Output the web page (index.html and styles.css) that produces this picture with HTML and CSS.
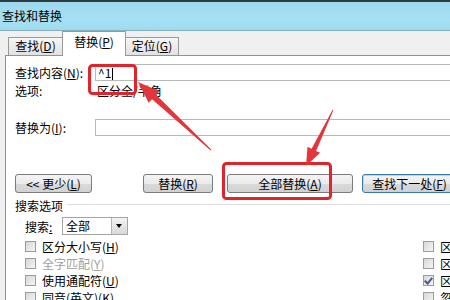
FILE: index.html
```
<!DOCTYPE html>
<html>
<head>
    <title>查找和替换</title>
    <link rel="stylesheet" href="styles.css">
</head>
<body>

    <div class="window">
        <div class="titlebar">查找和替换</div>

        <div class="dialog">
            <div class="tabs">
                <div class="tab tab-find">查找(<u>D</u>)</div>
                <div class="tab tab-replace active">替换(<u>P</u>)</div>
                <div class="tab tab-goto">定位(<u>G</u>)</div>
            </div>

            <div class="panel">
                <div class="field-row find-row">
                    <label class="field-label">查找内容(<u>N</u>):</label>
                    <div class="text-box">^1<span class="caret"></span></div>
                </div>
                <div class="option-row">
                    <span class="field-label">选项:</span>
                    <span class="option-value">区分全/半角</span>
                </div>
                <div class="field-row replace-row">
                    <label class="field-label">替换为(<u>I</u>):</label>
                    <div class="text-box"></div>
                </div>

                <div class="button-row">
                    <button class="btn btn-less" type="button">&lt;&lt; 更少(<u>L</u>)</button>
                    <button class="btn btn-replace" type="button">替换(<u>R</u>)</button>
                    <button class="btn btn-all" type="button">全部替换(<u>A</u>)</button>
                    <button class="btn btn-next default" type="button">查找下一处(<u>F</u>)</button>
                </div>

                <div class="group-title"><span>搜索选项</span><span class="group-line"></span></div>

                <div class="search-options">
                    <div class="search-row">
                        <span class="search-label">搜索<u>:</u></span>
                        <div class="select-box">
                            <span class="select-value">全部</span>
                            <span class="select-arrow"></span>
                        </div>
                    </div>

                    <div class="check-grid">
                        <div class="check"><span class="box"></span>区分大小写(<u>H</u>)</div>
                        <div class="check"><span class="box"></span>区分前缀(<u>X</u>)</div>
                        <div class="check disabled"><span class="box"></span>全字匹配(<u>Y</u>)</div>
                        <div class="check"><span class="box"></span>区分后缀(<u>T</u>)</div>
                        <div class="check"><span class="box"></span>使用通配符(<u>U</u>)</div>
                        <div class="check"><span class="box checked"></span>区分全/半角(<u>M</u>)</div>
                        <div class="check"><span class="box"></span>同音(英文)(<u>K</u>)</div>
                        <div class="check"><span class="box"></span>忽略标点符号(<u>S</u>)</div>
                    </div>
                </div>
            </div>
        </div>

        <svg class="annotations" width="450" height="300" viewBox="0 0 450 300">
            <rect x="89.5" y="65.5" width="46" height="28" rx="3" fill="none" stroke="#e0242a" stroke-width="3"/>
            <rect x="223.5" y="163.5" width="107" height="35" rx="3" fill="none" stroke="#e0242a" stroke-width="3"/>
            <polygon points="138,82 159.5,91.2 156.1,94.8 211.3,149.6 210.7,150.4 152.1,99.2 148.7,102.8" fill="#e3363c"/>
            <polygon points="306,166 320.1,152.8 316.1,150.9 333.4,110.2 332.6,109.8 311.6,148.7 307.5,146.8" fill="#e3363c"/>
        </svg>
    </div>

</body>
</html>
```

FILE: styles.css
```
body {
    margin: 0;
    width: 450px;
    height: 300px;
    overflow: hidden;
    font-family: "Noto Sans CJK SC", "Liberation Sans", sans-serif;
    font-size: 12px;
    color: #000;
    background: #ffffff;
}

u {
    text-decoration: underline;
    text-underline-offset: 1px;
}

.window {
    position: relative;
    width: 480px;
    height: 300px;
}

.titlebar {
    height: 28px;
    line-height: 28px;
    padding-left: 2px;
    border-top: 2px solid #2e3b3f;
    border-bottom: 1px solid #86aebc;
    background: linear-gradient(180deg, #9cd9ee 0%, #a6e0f3 60%, #9fdbef 100%);
}

.dialog {
    background: #f0f0f0;
    padding-left: 5px;
    height: 269px;
    display: flex;
    flex-direction: column;
}

.tabs {
    display: flex;
    align-items: flex-end;
    height: 26px;
    padding-left: 3px;
}

.tab {
    box-sizing: border-box;
    height: 18px;
    line-height: 16px;
    text-align: center;
    border: 1px solid #9a9a9a;
    border-bottom: none;
    background: linear-gradient(180deg, #f6f6f6, #e2e2e2);
}

.tab-find {
    width: 55px;
}

.tab-goto {
    width: 54px;
}

.tab.active {
    position: relative;
    z-index: 1;
    width: 64px;
    height: 25px;
    line-height: 20px;
    margin: 0 -1px -1px -1px;
    background: #ffffff;
}

.panel {
    flex: 1;
    background: #ffffff;
    border-top: 1px solid #929292;
    border-left: 1px solid #929292;
    padding: 8px 0 0 9px;
}

.field-row {
    display: flex;
    align-items: center;
    height: 17px;
}

.field-label {
    width: 80px;
    flex-shrink: 0;
}

.text-box {
    box-sizing: border-box;
    flex: 1;
    height: 17px;
    line-height: 15px;
    padding-left: 2px;
    border: 1px solid #b9b9b9;
    background: #ffffff;
}

.caret {
    display: inline-block;
    width: 1px;
    height: 12px;
    margin-left: 1px;
    vertical-align: -2px;
    background: #000;
}

.option-row {
    display: flex;
    height: 14px;
    line-height: 14px;
    margin-top: 3px;
}

.option-value {
    padding-left: 2px;
}

.replace-row {
    margin-top: 21px;
}

.button-row {
    display: flex;
    height: 19px;
    margin-top: 38px;
}

.btn {
    box-sizing: border-box;
    flex-shrink: 0;
    height: 19px;
    padding: 0;
    font-family: inherit;
    font-size: 12px;
    line-height: 17px;
    color: #000;
    border: 1px solid #7c7c7c;
    border-radius: 3px;
    background: linear-gradient(180deg, #f4f4f4 0%, #ebebeb 50%, #dadada 51%, #d2d2d2 100%);
}

.btn-less {
    width: 77px;
}

.btn-replace {
    width: 70px;
    margin-left: 51px;
}

.btn-all {
    width: 126px;
    margin-left: 14px;
}

.btn-next {
    width: 95px;
    margin-left: 9px;
}

.btn.default {
    border-color: #3a7aa8;
    box-shadow: inset 0 0 0 1px #a8dcf0;
}

.group-title {
    display: flex;
    align-items: center;
    height: 14px;
    line-height: 14px;
    margin-top: 6px;
}

.group-line {
    flex: 1;
    height: 1px;
    margin: -3px 0 0 4px;
    background: #dcdcdc;
}

.search-options {
    padding-left: 10px;
}

.search-row {
    display: flex;
    align-items: center;
    height: 18px;
    margin-top: 4px;
}

.search-label {
    width: 37px;
}

.select-box {
    box-sizing: border-box;
    display: flex;
    width: 66px;
    height: 18px;
    border: 1px solid #a5a5a5;
    background: #ffffff;
}

.select-value {
    flex: 1;
    line-height: 16px;
    padding-left: 3px;
}

.select-arrow {
    position: relative;
    width: 15px;
    border-left: 1px solid #b5b5b5;
    background: linear-gradient(180deg, #f3f3f3, #d9d9d9);
}

.select-arrow::after {
    content: "";
    position: absolute;
    left: 4px;
    top: 6px;
    border-left: 3px solid transparent;
    border-right: 3px solid transparent;
    border-top: 4px solid #000;
}

.check-grid {
    display: grid;
    grid-template-columns: 398px 120px;
    grid-auto-rows: 17px;
    margin-top: 3px;
}

.check {
    display: flex;
    align-items: center;
    white-space: nowrap;
}

.check.disabled {
    color: #a0a0a0;
}

.box {
    position: relative;
    box-sizing: border-box;
    width: 11px;
    height: 11px;
    margin-right: 6px;
    border: 1px solid #9c9c9c;
    background: linear-gradient(135deg, #d8d8d8, #f4f4f4);
}

.box.checked::after {
    content: "";
    position: absolute;
    left: 2px;
    top: 0;
    width: 3px;
    height: 6px;
    border-right: 2px solid #4a5a8c;
    border-bottom: 2px solid #4a5a8c;
    transform: rotate(40deg);
}

.annotations {
    position: absolute;
    left: 0;
    top: 0;
    pointer-events: none;
}
```
